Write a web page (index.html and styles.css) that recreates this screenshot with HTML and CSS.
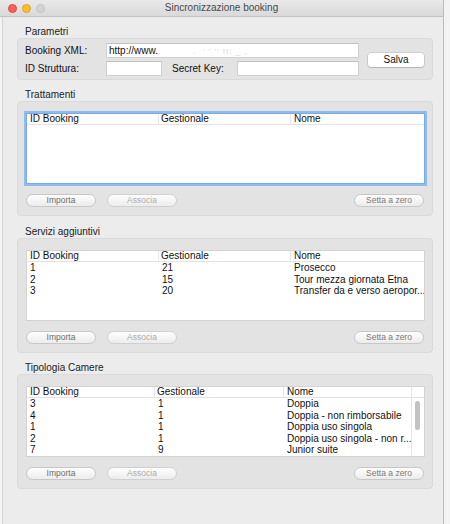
FILE: index.html
```html
<!DOCTYPE html>
<html lang="it">
<head>
<meta charset="utf-8">
<title>Sincronizzazione booking</title>
<link rel="stylesheet" href="styles.css">
</head>
<body>
<div class="window">
  <div class="titlebar">
    <div class="lights">
      <span class="light red"></span>
      <span class="light yellow"></span>
      <span class="light off"></span>
    </div>
    <div class="title">Sincronizzazione booking</div>
    <div></div>
  </div>
  <div class="content">
    <section class="section">
      <div class="group-label">Parametri</div>
      <div class="group params">
        <div class="param-rows">
          <div class="param-row">
            <span class="param-label">Booking XML:</span>
            <div class="field field-wide">http://www.<span class="blur">,&nbsp;&nbsp;&nbsp;&nbsp;&nbsp;&nbsp;&nbsp;&nbsp;&nbsp;&nbsp;.&nbsp;&nbsp;'&nbsp;'&nbsp;''&nbsp;!!:&nbsp;_&nbsp;,</span></div>
          </div>
          <div class="param-row">
            <span class="param-label">ID Struttura:</span>
            <div class="field field-short"></div>
            <span class="param-label secret-label">Secret Key:</span>
            <div class="field field-key"></div>
          </div>
        </div>
        <div class="salva">Salva</div>
      </div>
    </section>

    <section class="section">
      <div class="group-label">Trattamenti</div>
      <div class="group panel">
        <div class="table focused">
          <div class="thead cols-a">
            <div class="th">ID Booking</div>
            <div class="th">Gestionale</div>
            <div class="th last">Nome</div>
          </div>
        </div>
        <div class="btns">
          <div class="btn btn-main">Importa</div>
          <div class="btn btn-dim">Associa</div>
          <div class="btn btn-right">Setta a zero</div>
        </div>
      </div>
    </section>

    <section class="section gap-10">
      <div class="group-label">Servizi aggiuntivi</div>
      <div class="group panel">
        <div class="table">
          <div class="thead cols-a">
            <div class="th">ID Booking</div>
            <div class="th">Gestionale</div>
            <div class="th last">Nome</div>
          </div>
          <div class="row cols-a"><div class="td">1</div><div class="td">21</div><div class="td">Prosecco</div></div>
          <div class="row cols-a"><div class="td">2</div><div class="td">15</div><div class="td">Tour mezza giornata Etna</div></div>
          <div class="row cols-a"><div class="td">3</div><div class="td">20</div><div class="td">Transfer da e verso aeropor...</div></div>
        </div>
        <div class="btns">
          <div class="btn btn-main">Importa</div>
          <div class="btn btn-dim">Associa</div>
          <div class="btn btn-right">Setta a zero</div>
        </div>
      </div>
    </section>

    <section class="section">
      <div class="group-label">Tipologia Camere</div>
      <div class="group panel">
        <div class="table scrolling">
          <div class="table-main">
            <div class="thead cols-b">
              <div class="th">ID Booking</div>
              <div class="th">Gestionale</div>
              <div class="th last">Nome</div>
            </div>
            <div class="row cols-b"><div class="td">3</div><div class="td">1</div><div class="td">Doppia</div></div>
            <div class="row cols-b"><div class="td">4</div><div class="td">1</div><div class="td">Doppia - non rimborsabile</div></div>
            <div class="row cols-b"><div class="td">1</div><div class="td">1</div><div class="td">Doppia uso singola</div></div>
            <div class="row cols-b"><div class="td">2</div><div class="td">1</div><div class="td">Doppia uso singola - non r...</div></div>
            <div class="row cols-b"><div class="td">7</div><div class="td">9</div><div class="td">Junior suite</div></div>
          </div>
          <div class="scroll-track">
            <div class="scroll-head"></div>
            <div class="scroll-thumb"></div>
          </div>
        </div>
        <div class="btns">
          <div class="btn btn-main">Importa</div>
          <div class="btn btn-dim">Associa</div>
          <div class="btn btn-right">Setta a zero</div>
        </div>
      </div>
    </section>
  </div>
</div>
</body>
</html>
```

FILE: styles.css
```css
html, body {
  margin: 0;
  padding: 0;
}

body {
  width: 450px;
  height: 524px;
  overflow: hidden;
  background: #f3f3f3;
  font-family: "Liberation Sans", Arial, sans-serif;
  font-size: 10px;
  color: #1a1a1a;
}

.window {
  width: 443px;
  height: 524px;
  border-right: 1px solid #bdbdbd;
  background: #f4f4f4;
  display: flex;
  flex-direction: column;
}

.titlebar {
  height: 16px;
  flex: none;
  border-bottom: 1px solid #c2c2c2;
  background: linear-gradient(#e9e9e9, #d9d9d9);
  display: grid;
  grid-template-columns: 1fr auto 1fr;
  align-items: center;
}

.lights {
  display: flex;
  gap: 5px;
  padding-left: 8px;
}

.light {
  width: 9px;
  height: 9px;
  border-radius: 50%;
  box-sizing: border-box;
}

.light.red {
  background: #fc5f58;
  border: 0.5px solid #e5463f;
}

.light.yellow {
  background: #fdbc2e;
  border: 0.5px solid #e2a126;
}

.light.off {
  background: #d3d3d3;
  border: 0.5px solid #c4c4c4;
}

.title {
  font-size: 10px;
  line-height: 16px;
  color: #4a4a4a;
}

.content {
  flex: 1;
  margin-left: 2px;
  border-left: 1px solid #d6d6d6;
  background: #ececec;
  padding-left: 14px;
}

.section {
  margin-top: 9px;
}

.section.gap-10 {
  margin-top: 10px;
}

.group-label {
  padding-left: 8px;
  line-height: 12px;
  height: 12px;
  color: #222;
}

.group {
  width: 416px;
  box-sizing: border-box;
  background: #e3e3e3;
  border: 1px solid #dadada;
  border-radius: 4px;
}

/* Parametri */
.params {
  display: flex;
  align-items: center;
  padding: 4px 8px 3px 7px;
}

.param-rows {
  display: flex;
  flex-direction: column;
  gap: 3px;
}

.param-row {
  display: flex;
  align-items: center;
  height: 15px;
}

.param-label {
  width: 81px;
  line-height: 15px;
  color: #111;
}

.secret-label {
  width: 65px;
  margin-left: 10px;
}

.field {
  height: 15px;
  box-sizing: border-box;
  background: #fff;
  border: 1px solid #d0d0d0;
  border-top-color: #c2c2c2;
  padding-left: 2px;
  line-height: 13px;
  white-space: nowrap;
  overflow: hidden;
  color: #111;
}

.field-wide {
  width: 253px;
}

.field-short {
  width: 56px;
}

.field-key {
  width: 122px;
}

.blur {
  color: #d2d2d2;
  font-size: 8px;
  letter-spacing: 1px;
}

.salva {
  margin-left: 9px;
  width: 56px;
  height: 14px;
  background: #fff;
  border-radius: 3px;
  box-shadow: 0 0 0 0.5px rgba(0, 0, 0, 0.18), 0 1px 1px rgba(0, 0, 0, 0.12);
  text-align: center;
  line-height: 14px;
  color: #111;
}

/* Table panels */
.panel {
  padding: 11px 7px 8px 8px;
}

.table {
  height: 71px;
  box-sizing: border-box;
  background: #fff;
  border: 1px solid #d3d3d3;
  overflow: hidden;
}

.table.focused {
  border-color: #7aaae6;
  box-shadow: 0 0 0 2px #8fbbee;
}

.table.scrolling {
  display: flex;
}

.table-main {
  flex: 1;
  min-width: 0;
}

.cols-a {
  display: grid;
  grid-template-columns: 132px 132px 1fr;
}

.cols-b {
  display: grid;
  grid-template-columns: 128px 129px 1fr;
}

.thead {
  height: 10px;
  border-bottom: 1px solid #e3e3e3;
  line-height: 10px;
}

.th {
  padding-left: 3px;
  border-right: 1px solid #e6e6e6;
  color: #111;
  white-space: nowrap;
  overflow: hidden;
}

.th.last {
  border-right: none;
}

.cols-a .th:nth-child(2),
.cols-b .th:nth-child(2) {
  padding-left: 2px;
}

.row {
  height: 11.5px;
  line-height: 11.5px;
}

.td {
  padding-left: 3px;
  white-space: nowrap;
  overflow: hidden;
  color: #111;
}

.row .td:nth-child(2) {
  padding-left: 3px;
}

.cols-a .td:first-child,
.cols-b .td:first-child {
  padding-left: 3px;
}

.cols-a .td:nth-child(2),
.cols-b .td:nth-child(2) {
  padding-left: 3px;
}

.cols-a .td:nth-child(3),
.cols-b .td:nth-child(3) {
  padding-left: 3px;
}

.scroll-track {
  width: 12px;
  flex: none;
  border-left: 1px solid #e6e6e6;
}

.scroll-head {
  height: 10px;
  border-bottom: 1px solid #e3e3e3;
}

.scroll-thumb {
  width: 5px;
  height: 29px;
  margin: 3px 0 0 3px;
  border-radius: 3px;
  background: #c3c3c3;
}

/* Buttons */
.btns {
  display: flex;
  margin-top: 10px;
}

.btn {
  width: 70px;
  height: 13px;
  box-sizing: border-box;
  border: 1px solid #c7c7c7;
  border-radius: 7px;
  background: linear-gradient(#fefefe, #ececec);
  font-size: 8.5px;
  line-height: 11px;
  text-align: center;
  white-space: nowrap;
}

.btn-main {
  color: #6c6c6c;
}

.btn-dim {
  margin-left: 11px;
  color: #acacac;
  border-color: #d0d0d0;
}

.btn-right {
  margin-left: auto;
  margin-right: 1px;
  color: #7a7a7a;
}
```
